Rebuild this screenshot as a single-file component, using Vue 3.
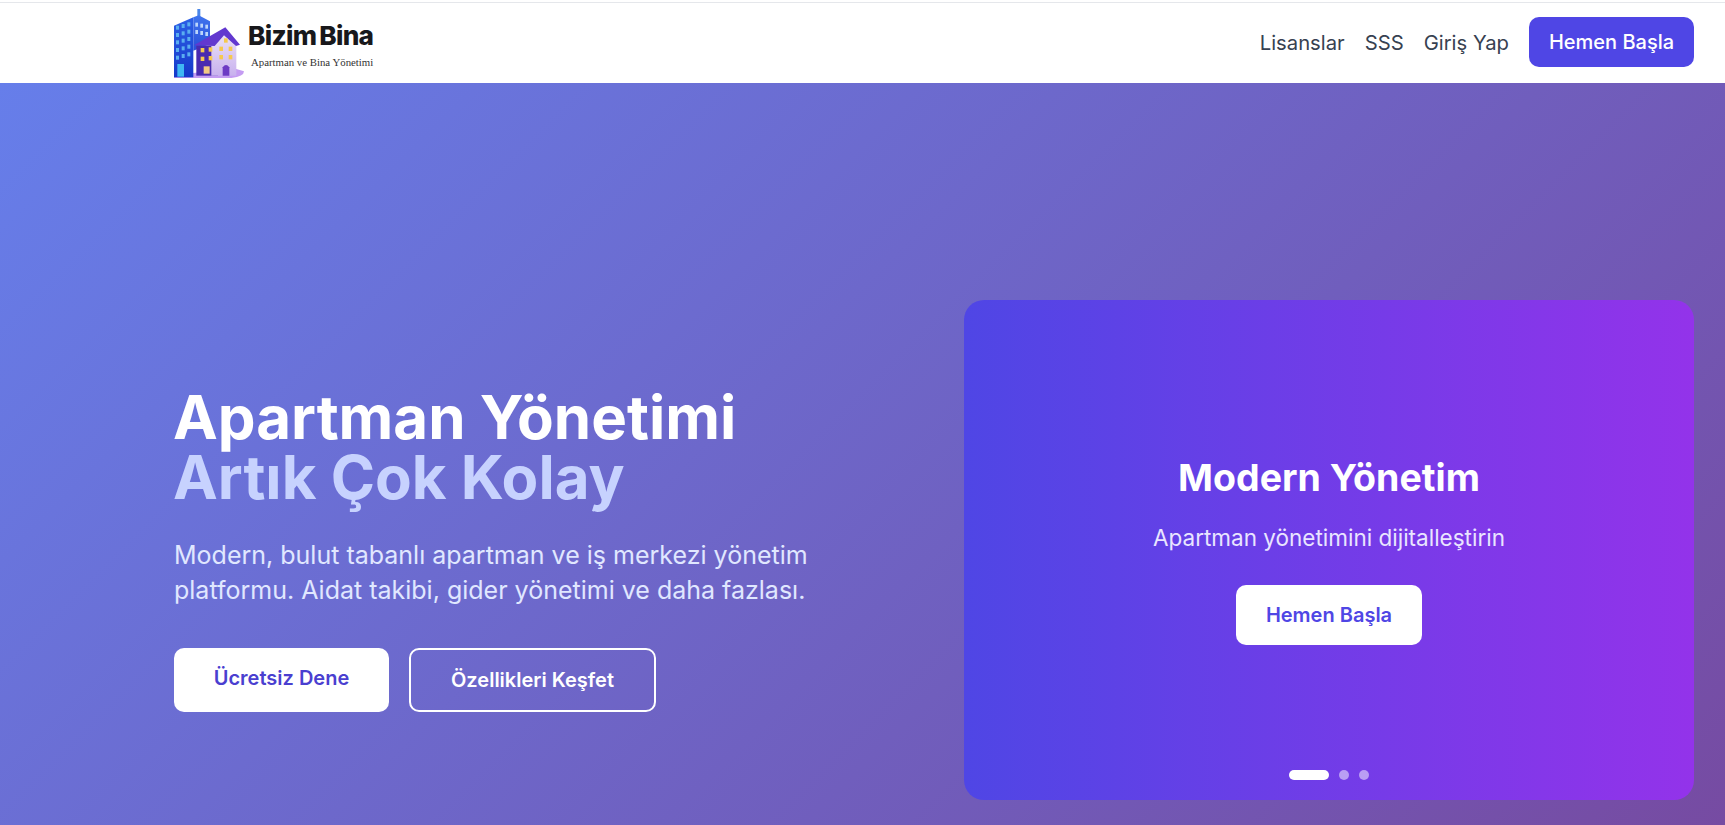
<template>
  <div class="page">
    <header class="topbar">
      <div class="logo">
        <svg class="logo-mark" viewBox="18 22 210 210" width="70" height="70">
          <defs>
            <linearGradient id="towerLeft" x1="0" y1="0" x2="0" y2="1">
              <stop offset="0" stop-color="#2c5fe6" />
              <stop offset="1" stop-color="#1539c9" />
            </linearGradient>
            <linearGradient id="towerRight" x1="0" y1="0" x2="0" y2="1">
              <stop offset="0" stop-color="#3f74ee" />
              <stop offset="1" stop-color="#2a4fd8" />
            </linearGradient>
            <linearGradient id="houseFront" x1="0" y1="0" x2="0" y2="1">
              <stop offset="0" stop-color="#ece3f8" />
              <stop offset="1" stop-color="#c8b1ee" />
            </linearGradient>
          </defs>
          <!-- base -->
          <path d="M18 232 L190 232 Q228 228 228 212 L205 205 L18 222 Z" fill="#c49cf2" />
          <!-- tower -->
          <path d="M88 25 H97 V48 H88 Z" fill="#4a86e8" />
          <path d="M76 50 L92 44 L126 62 V130 L76 150 Z" fill="url(#towerRight)" />
          <path d="M18 75 L76 50 V230 H18 Z" fill="url(#towerLeft)" />
          <rect v-for="w in towerFront" :key="w.k" :x="w.x" :y="w.y" width="9" height="12" fill="#5aaef0" />
          <rect v-for="w in towerSide" :key="w.k" :x="w.x" :y="w.y" width="8" height="12" fill="#bcd6fb" />
          <rect x="28" y="190" width="20" height="38" fill="#3fb8f3" />
          <!-- house -->
          <path d="M85 135 H150 V225 H85 Z" fill="#4a2bb0" />
          <path d="M130 132 L172 98 L205 132 V225 H130 Z" fill="url(#houseFront)" />
          <path d="M78 134 L172 80 L216 132 L204 136 L168 104 L140 136 Z" fill="#6238cf" />
          <rect v-for="w in houseWindows" :key="w.k" :x="w.x" :y="w.y" width="11" height="13" fill="#f5c94f" />
          <rect x="107" y="197" width="18" height="22" fill="#f1c983" />
          <path d="M164 225 V200 Q174 186 184 200 V225 Z" fill="#6d3ac4" />
        </svg>
        <div class="logo-text">
          <div class="logo-name">Bizim Bina</div>
          <div class="logo-sub">Apartman ve Bina Yönetimi</div>
        </div>
      </div>
      <nav class="nav">
        <a class="nav-link">Lisanslar</a>
        <a class="nav-link">SSS</a>
        <a class="nav-link">Giriş Yap</a>
        <button class="nav-cta">Hemen Başla</button>
      </nav>
    </header>

    <section class="hero">
      <div class="hero-copy">
        <h1 class="hero-title">Apartman Yönetimi<br /><span class="accent">Artık Çok Kolay</span></h1>
        <p class="hero-lead">Modern, bulut tabanlı apartman ve iş merkezi yönetim platformu. Aidat takibi, gider yönetimi ve daha fazlası.</p>
        <div class="hero-actions">
          <button class="btn-white">Ücretsiz Dene</button>
          <button class="btn-outline">Özellikleri Keşfet</button>
        </div>
      </div>
      <div class="slide-card">
        <h2 class="slide-title">Modern Yönetim</h2>
        <p class="slide-text">Apartman yönetimini dijitalleştirin</p>
        <button class="slide-btn">Hemen Başla</button>
        <div class="dots">
          <span class="dot active"></span>
          <span class="dot"></span>
          <span class="dot"></span>
        </div>
      </div>
    </section>
  </div>
</template>

<script setup>
const towerFront = []
for (const [r, y] of [75, 97, 119, 142, 165].entries()) {
  for (const [c, x] of [24, 41, 58].entries()) {
    towerFront.push({ k: `${r}-${c}`, x, y: y - c * 5 })
  }
}
const towerSide = []
for (const [r, y] of [66, 88].entries()) {
  for (const [c, x] of [82, 97, 112].entries()) {
    towerSide.push({ k: `${r}-${c}`, x, y: y + c * 3 })
  }
}
const houseWindows = [
  { k: 'a', x: 98, y: 142 },
  { k: 'b', x: 122, y: 140 },
  { k: 'c', x: 98, y: 168 },
  { k: 'd', x: 122, y: 166 },
  { k: 'e', x: 168, y: 113 },
  { k: 'f', x: 154, y: 138 },
  { k: 'g', x: 182, y: 138 },
  { k: 'h', x: 154, y: 163 },
  { k: 'i', x: 182, y: 163 },
]
</script>

<style>
html,
body {
  margin: 0;
  overflow: hidden;
}
</style>

<style scoped>
.page {
  width: 1725px;
  height: 825px;
  display: flex;
  flex-direction: column;
  font-family: Inter, "Liberation Sans", sans-serif;
  padding-top: 2px;
  box-sizing: border-box;
}

/* header */
.topbar {
  height: 81px;
  flex: none;
  box-sizing: border-box;
  background: #fff;
  border-top: 1px solid #e5e7eb;
  display: flex;
  align-items: center;
  justify-content: space-between;
  padding: 0 31px 2px 174px;
}

.logo {
  display: flex;
  align-items: center;
  gap: 4px;
}

.logo-mark {
  display: block;
  margin-top: 2px;
}

.logo-text {
  padding-top: 4px;
}

.logo-name {
  font-size: 26.2px;
  font-weight: 800;
  letter-spacing: -0.7px;
  color: #18181b;
  line-height: 32px;
  word-spacing: -2px;
}

.logo-sub {
  font-family: "Liberation Serif", serif;
  font-size: 10.8px;
  color: #333;
  margin: 3px 0 0 3px;
  line-height: 14px;
}

.nav {
  display: flex;
  align-items: center;
  gap: 20px;
}

.nav-link {
  font-size: 20.25px;
  color: #374151;
}

.nav-cta {
  width: 165px;
  height: 50px;
  border: none;
  border-radius: 10px;
  background: #4f46e5;
  color: #fff;
  font: 500 20px Inter, sans-serif;
}

/* hero */
.hero {
  flex: 1;
  background: linear-gradient(135deg, #667eea 0%, #764ba2 100%);
  display: grid;
  grid-template-columns: 1fr 730px;
  align-items: start;
  padding: 217px 31px 0 174px;
  overflow: hidden;
}

.hero-copy {
  padding-top: 87px;
}

.hero-title {
  margin: 0 0 0 -1px;
  font-size: 60px;
  font-weight: 700;
  line-height: 60px;
  color: #fff;
}

.accent {
  color: #c7d2fe;
}

.hero-lead {
  margin: 31px 0 0;
  width: 660px;
  font-size: 25px;
  line-height: 35px;
  color: #e0e7ff;
}

.hero-actions {
  display: flex;
  gap: 20px;
  margin-top: 40px;
  align-items: flex-start;
}

.btn-white {
  width: 215px;
  height: 64px;
  border: none;
  border-radius: 10px;
  background: #fff;
  color: #4a3fd0;
  font: 600 20px Inter, sans-serif;
  padding-bottom: 6px;
}

.btn-outline {
  width: 247px;
  height: 64px;
  border: 2px solid #fff;
  border-radius: 10px;
  background: transparent;
  color: #fff;
  font: 600 20px Inter, sans-serif;
}

.slide-card {
  height: 500px;
  border-radius: 20px;
  background: linear-gradient(90deg, #4f46e5 0%, #9333ea 100%);
  display: flex;
  flex-direction: column;
  align-items: center;
  position: relative;
  color: #fff;
  padding-top: 158px;
  box-sizing: border-box;
}

.slide-title {
  margin: 0;
  font-size: 37.5px;
  font-weight: 700;
  line-height: 40px;
}

.slide-text {
  margin: 24px 0 0;
  font-size: 22.5px;
  line-height: 32px;
  color: #e9e5ff;
}

.slide-btn {
  margin-top: 31px;
  width: 186px;
  height: 60px;
  border: none;
  border-radius: 10px;
  background: #fff;
  color: #4f46e5;
  font: 600 20px Inter, sans-serif;
}

.dots {
  position: absolute;
  bottom: 20px;
  left: 0;
  right: 0;
  display: flex;
  justify-content: center;
  gap: 10px;
}

.dot {
  width: 10px;
  height: 10px;
  border-radius: 5px;
  background: rgba(255, 255, 255, 0.5);
}

.dot.active {
  width: 40px;
  background: #fff;
}
</style>
